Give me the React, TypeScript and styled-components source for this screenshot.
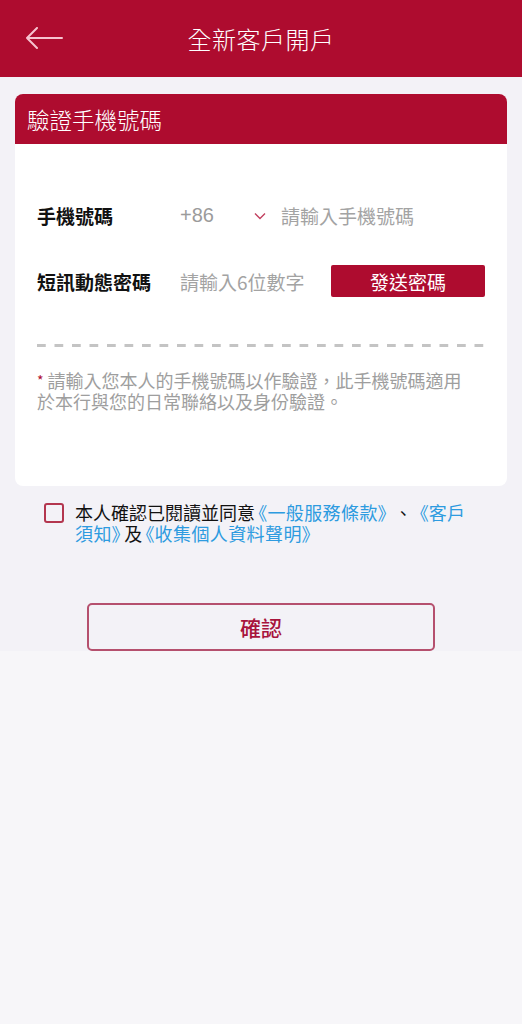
import React from "react";
import styled, { createGlobalStyle } from "styled-components";

const GlobalStyle = createGlobalStyle`
  html, body {
    margin: 0;
    padding: 0;
    background: #f7f6f9;
    font-family: "Noto Sans CJK TC", "Noto Sans", sans-serif;
  }
  * { box-sizing: border-box; }
`;

const App = () => {
  return (
    <>
      <GlobalStyle />
      <Page>
        <Header>
          <BackButton aria-label="back">
            <svg width="38" height="22" viewBox="0 0 38 22" fill="none">
              <path d="M37 11H2M12 1L2 11l10 10" stroke="#f6c3cf" strokeWidth="2" strokeLinecap="round" strokeLinejoin="round" />
            </svg>
          </BackButton>
          <Title>全新客戶開戶</Title>
        </Header>
        <Main>
          <Card>
            <CardHead>驗證手機號碼</CardHead>
            <CardBody>
              <Row>
                <Label>手機號碼</Label>
                <Code>+86</Code>
                <Chevron>
                  <svg width="12" height="8" viewBox="0 0 12 8" fill="none">
                    <path d="M1 1.5l5 5 5-5" stroke="#c2405f" strokeWidth="1.4" />
                  </svg>
                </Chevron>
                <Placeholder>請輸入手機號碼</Placeholder>
              </Row>
              <Row>
                <Label>短訊動態密碼</Label>
                <Placeholder>請輸入6位數字</Placeholder>
                <SendButton>發送密碼</SendButton>
              </Row>
              <Dashed />
              <Note>
                <Star>*</Star> 請輸入您本人的手機號碼以作驗證，此手機號碼適用於本行與您的日常聯絡以及身份驗證。
              </Note>
            </CardBody>
          </Card>
          <Agree>
            <Box />
            <AgreeText>
              本人確認已閱讀並同意<Link>《一般服務條款》</Link> 、 <Link>《客戶須知》</Link>及<Link>《收集個人資料聲明》</Link>
            </AgreeText>
          </Agree>
          <ConfirmButton>確認</ConfirmButton>
        </Main>
      </Page>
    </>
  );
};

export default App;

const Page = styled.div`
  width: 100%;
  min-height: 1024px;
  background: #f7f6f9;
`;

const Header = styled.div`
  height: 77px;
  background: #ae0c2f;
  display: flex;
  align-items: center;
  justify-content: center;
  position: relative;
`;

const BackButton = styled.div`
  position: absolute;
  left: 25px;
  top: 27px;
  display: flex;
`;

const Title = styled.div`
  color: #ffffff;
  font-size: 24px;
  font-weight: 300;
  letter-spacing: 0.5px;
`;

const Main = styled.div`
  background: #f3f2f7;
  padding: 17px 15px 0;
  height: 574px;
`;

const Card = styled.div`
  background: #ffffff;
  border-radius: 8px;
  overflow: hidden;
  height: 392px;
`;

const CardHead = styled.div`
  height: 50px;
  background: #ae0c2f;
  color: #ffffff;
  font-size: 22.5px;
  font-weight: 300;
  display: flex;
  align-items: center;
  padding-left: 12px;
`;

const CardBody = styled.div`
  padding: 55px 22px 0;
`;

const Row = styled.div`
  display: flex;
  align-items: center;
  height: 32px;
  margin-bottom: 34px;
`;

const Label = styled.div`
  width: 143px;
  font-size: 19px;
  font-weight: 700;
  color: #111111;
`;

const Code = styled.div`
  width: 74px;
  font-family: "Liberation Sans", Arial, sans-serif;
  font-size: 20px;
  color: #9b9b9b;
`;

const Chevron = styled.div`
  display: flex;
  width: 27px;
  padding-top: 2px;
`;

const Placeholder = styled.div`
  flex: 1;
  font-size: 19px;
  color: #a3a3a3;
`;

const SendButton = styled.div`
  width: 154px;
  height: 32px;
  background: #ae0c2f;
  border-radius: 2px;
  color: #ffffff;
  font-size: 19px;
  display: flex;
  align-items: center;
  justify-content: center;
`;

const Dashed = styled.div`
  margin-top: 47px;
  height: 3px;
  background-image: linear-gradient(to right, #c4c4c4 0 9px, transparent 9px 100%);
  background-size: 17.5px 3px;
  background-repeat: repeat-x;
`;

const Note = styled.div`
  margin-top: 23px;
  padding-right: 12px;
  font-size: 18px;
  line-height: 21px;
  color: #9e9e9e;
`;

const Star = styled.span`
  color: #ae0c2f;
  font-size: 14px;
  vertical-align: 2px;
`;

const Agree = styled.div`
  display: flex;
  align-items: flex-start;
  padding: 16px 34px 0 29px;
`;

const Box = styled.div`
  flex: none;
  width: 20px;
  height: 20px;
  border: 2px solid #b3364f;
  border-radius: 3px;
  margin-top: 1px;
  margin-right: 11px;
`;

const AgreeText = styled.div`
  font-size: 18px;
  line-height: 21px;
  color: #111111;
`;

const Link = styled.span`
  color: #2d9be0;
  font-feature-settings: "palt";
  letter-spacing: 0.4px;
  margin: 0 3px;
`;

const ConfirmButton = styled.div`
  margin: 59px auto 0;
  width: 348px;
  height: 48px;
  border: 2px solid #b5506e;
  border-radius: 5px;
  display: flex;
  align-items: center;
  justify-content: center;
  color: #a8143c;
  font-size: 21px;
  font-weight: 500;
`;
